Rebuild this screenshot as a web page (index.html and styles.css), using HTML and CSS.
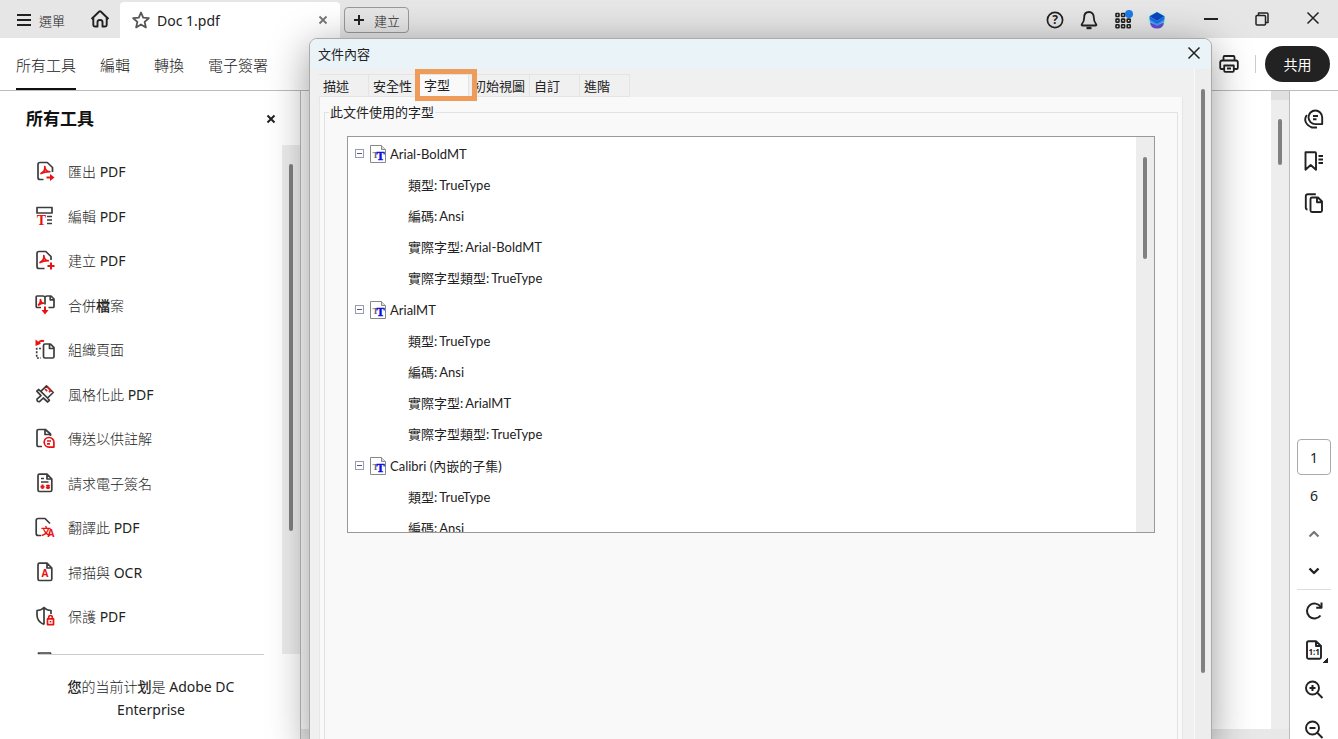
FILE: index.html
```html
<!DOCTYPE html>
<html lang="zh-Hant">
<head>
    <meta charset="UTF-8">
    <title>Doc 1.pdf</title>
    <meta name="viewport" content="width=device-width, initial-scale=1.0">
    <link rel="stylesheet" href="styles.css">
</head>
<body>
    <div class="app">
        <!-- window title bar -->
        <header class="titlebar">
            <button class="menu-btn" type="button">
                <svg class="icon" width="16" height="16" viewBox="0 0 16 16"><path d="M1 3h14M1 8h14M1 13h14" stroke-width="2"/></svg>
                選單
            </button>
            <button class="home-btn" type="button" aria-label="首頁">
                <svg class="icon" width="20" height="20" viewBox="0 0 20 20"><path d="M1.500 10 9 2.800q1-.9 2 0l7.500 7.200M3.300 8.500V16q0 1.500 1.500 1.500h2.700v-4.500q0-2 2.500-2t2.500 2v4.500h2.700q1.500 0 1.500-1.500V8.500" stroke-width="1.900"/></svg>
            </button>
            <div class="doc-tab">
                <svg class="icon star" width="18" height="18" viewBox="0 0 18 18"><path d="m9 1.500 2.200 5.200 5.600.5-4.200 3.700 1.300 5.500L9 13.500l-4.900 2.900 1.300-5.500L1.200 7.200l5.600-.5z" stroke-width="1.800"/></svg>
                <span class="doc-name">Doc 1.pdf</span>
                <button type="button" aria-label="關閉標籤">
                    <svg class="icon grey" width="10" height="10" viewBox="0 0 10 10"><path d="m1.500 1.500 7 7m0-7-7 7" stroke-width="1.800"/></svg>
                </button>
            </div>
            <button class="create-btn" type="button">
                <svg class="icon" width="12" height="12" viewBox="0 0 12 12"><path d="M6 1v10M1 6h10" stroke-width="2"/></svg>
                建立
            </button>
            <div class="title-tools">
                <button type="button" aria-label="說明">
                    <svg class="icon" width="18" height="18" viewBox="0 0 18 18"><circle cx="9" cy="9" r="7.600" stroke-width="1.700"/><text x="9" y="13.200" class="glyph help solid">?</text></svg>
                </button>
                <button type="button" aria-label="通知">
                    <svg class="icon" width="18" height="20" viewBox="0 0 18 20"><path d="M9 2C5.800 2 4.200 4.500 4.200 7.500c0 4-1 5-2.400 6.700-.4.600-.1 1.300.6 1.300h13.200c.7 0 1-.7.6-1.300-1.400-1.700-2.400-2.700-2.400-6.700C13.800 4.500 12.200 2 9 2z" stroke-width="1.800"/><path d="M6.500 18h5" stroke-width="2.400"/></svg>
                </button>
                <button type="button" aria-label="應用程式">
                    <svg class="icon" width="20" height="20" viewBox="0 0 20 20"><g stroke-width="1.600"><rect x="3" y="3.500" width="3" height="3" rx=".5"/><rect x="8.600" y="3.500" width="3" height="3" rx=".5"/><rect x="3" y="9.100" width="3" height="3" rx=".5"/><rect x="8.600" y="9.100" width="3" height="3" rx=".5"/><rect x="14.200" y="9.100" width="3" height="3" rx=".5"/><rect x="3" y="14.700" width="3" height="3" rx=".5"/><rect x="8.600" y="14.700" width="3" height="3" rx=".5"/><rect x="14.200" y="14.700" width="3" height="3" rx=".5"/></g><circle cx="16" cy="4" r="4" class="badge"/></svg>
                </button>
                <button type="button" aria-label="帳戶">
                    <svg width="20" height="20" viewBox="0 0 20 20"><circle cx="10" cy="10" r="9" fill="#c3f3df"/><path d="M3 12.500 10 15l7-2.500q-.5 6-7 6T3 12.500z" fill="#6b45d8"/><path d="m2.800 8.500 7.200 4 7.200-4v3.200L10 16l-7.200-4.300z" fill="#3aa0ee"/><path d="m10 2 7.500 4.300L10 11 2.500 6.300z" fill="#0b43c4"/><path d="M2.500 6.300 10 11l7.500-4.700v3L10 13.700 2.500 9.300z" fill="#176be6"/></svg>
                </button>
            </div>
            <div class="window-controls">
                <button type="button" aria-label="最小化"><svg class="icon" width="16" height="16" viewBox="0 0 16 16"><path d="M1 8h14" stroke-width="2"/></svg></button>
                <button type="button" aria-label="還原"><svg class="icon" width="16" height="16" viewBox="0 0 16 16"><rect x="2" y="4.500" width="9.500" height="9.500" rx="1"/><path d="M4.500 4V2H13q1 0 1 1v8.500h-2"/></svg></button>
                <button type="button" aria-label="關閉"><svg class="icon" width="16" height="16" viewBox="0 0 16 16"><path d="m2.500 1.500 11 11m0-11-11 11"/></svg></button>
            </div>
        </header>

        <div class="toolbar">
            <nav class="main-nav">
                <a class="active" href="#">所有工具</a>
                <a href="#">編輯</a>
                <a href="#">轉換</a>
                <a href="#">電子簽署</a>
            </nav>
            <button class="print-btn" type="button" aria-label="列印">
                <svg class="icon" width="20" height="20" viewBox="0 0 20 20"><path d="M4.500 6V3.200q0-1.200 1.200-1.200h8.600q1.200 0 1.200 1.200V6M5 15H2.500q-1.300 0-1.300-1.300V8.500Q1.200 6.500 3.200 6.500h13.600q2 0 2 2v5.200q0 1.300-1.300 1.300H15" stroke-width="1.800"/><path d="M5.200 11.500h9.600v5.300q0 1-1 1H6.200q-1 0-1-1zM8 14.500h4" stroke-width="1.800"/></svg>
            </button>
            <button class="share-btn" type="button">共用</button>
        </div>

        <div class="workspace">
            <aside class="tools-panel">
                <div class="panel-head">
                    <h2>所有工具</h2>
                    <button type="button" aria-label="關閉面板"><svg class="icon" width="10" height="10" viewBox="0 0 10 10"><path d="m1.500 1.500 7 7m0-7-7 7" stroke-width="2"/></svg></button>
                </div>
                <div class="tools-scroll">
                    <ul class="tool-list">
                        <li><a href="#">
                            <svg class="icon" viewBox="0 0 20 20"><path d="M8.500 18.500H5q-2 0-2-2v-13q0-2 2-2h7.300L17.500 6.500V11"/><path class="red" d="M6 12.500C8.500 11 10.300 8.500 9.800 5.500c.3 3 2 5.200 5 5.200-2.800 0-6.300.3-8.800 1.800z"/><path class="red thick" d="M11.500 16.500H16"/><path class="red-fill" d="m15 13 4.500 3.500L15 20z"/></svg>
                            <span>匯出 PDF</span></a></li>
                        <li><a href="#">
                            <svg class="icon" viewBox="0 0 20 20"><path d="M2 1.500h15v5.500H2zM12 10.500h5M12 14h5M12 17.500h5"/><text x="1.800" y="19" class="glyph serif red-fill">T</text></svg>
                            <span>編輯 PDF</span></a></li>
                        <li><a href="#">
                            <svg class="icon" viewBox="0 0 20 20"><path d="M9.500 18.500H4q-2 0-2-2v-13q0-2 2-2h6.800L16 6.500V10"/><path class="red" d="M5 12.500C7.500 11 9.300 8.500 8.800 5.500c.3 3 2 5.200 4.500 5.200-2.300 0-5.800.3-8.300 1.800z"/><path class="red thick" d="M16 12.500v7M12.500 16h7"/></svg>
                            <span>建立 PDF</span></a></li>
                        <li><a href="#">
                            <svg class="icon" viewBox="0 0 20 20"><path d="M6 12.500H2.200q-1 0-1-1V2q0-1 1-1H8q1.500 0 2 1.200Q10.500 1 12 1h4l3 3v7.500q0 1-1 1h-4.500M10 2.500v7M15.200 1v3.800H19"/><path class="red" d="M3.500 10c1.500-1 2.300-3 2-5.500.3 2.500 1 3.700 2.800 3.700-2 0-3.300.6-4.800 1.800z"/><path class="red thick" d="M10 11.500V16"/><path class="red-fill" d="m6.500 15 3.500 4.500 3.500-4.500z"/></svg>
                            <span>合併<b>檔</b>案</span></a></li>
                        <li><a href="#">
                            <svg class="icon" viewBox="0 0 20 20"><path d="M10 5h5.500L19 8.700v8.800q0 1.500-1.500 1.500H10q-1.500 0-1.500-1.500v-11Q8.500 5 10 5zM14.500 5v4.500H19"/><path stroke-dasharray="2 1.500" d="M6 9.500H1.700V19H6"/><path class="red thick" d="M9 2.200Q5.500.8 3.500 4"/><path class="red-fill" d="M.5.500v6.500l5.500-2.300z"/></svg>
                            <span>組織頁面</span></a></li>
                        <li><a href="#">
                            <svg class="icon" viewBox="0 0 20 20"><path d="m11.500 1.800 6.700 6.700-5.700 5.500-6.700-6.700zM5.800 7.300 3.500 5.500 1.800 7.200l4.200 4.500-4 3.500q-.3 2.800 2.500 2.500L8.300 14l4.400 4 1.700-1.700-1.900-2.300"/><path class="red" d="m10 5 2.200 2.200M12.200 3l3.200 3.200M14 8.200l1.800-1.800"/></svg>
                            <span>風格化此 PDF</span></a></li>
                        <li><a href="#">
                            <svg class="icon" viewBox="0 0 20 20"><path d="M7 18.500H3.800Q2 18.500 2 16.700V3.200q0-1.700 1.800-1.700h6.500L15.500 6v2M10 1.800v4.700h5"/><path class="red" d="M14 9.500a4.800 4.800 0 1 0 0 9.600h4.900v-4.800A4.800 4.800 0 0 0 14 9.500zM12 13h4M12 15.800h3"/></svg>
                            <span>傳送以供註解</span></a></li>
                        <li><a href="#">
                            <svg class="icon" viewBox="0 0 20 20"><path d="M4.500 1.200H12L16.800 6v11q0 1.500-1.500 1.500H4.500Q3 18.500 3 17V2.700q0-1.500 1.500-1.500zM12 1.500V6h4.500M6 5.500h3M6 9h7.500"/><path class="red thick" d="M7.500 11.500v4.500M5.500 13.700h4M11.500 12l3 3.500m0-3.500-3 3.500"/></svg>
                            <span>請求電子簽名</span></a></li>
                        <li><a href="#">
                            <svg class="icon" viewBox="0 0 20 20"><path d="M6 18.500H3.200q-2 0-2-2v-13q0-2 2-2H10L15 6.500"/><text x="6" y="17.500" class="glyph red-fill">文</text><text x="12.500" y="19.500" class="glyph red-fill">A</text></svg>
                            <span>翻譯此 PDF</span></a></li>
                        <li><a href="#">
                            <svg class="icon" viewBox="0 0 20 20"><path d="M4.500 1.200H12L16.800 6v11q0 1.500-1.500 1.500H4.500Q3 18.500 3 17V2.700q0-1.500 1.500-1.500zM12 1.500V6h4.500"/><text x="6.500" y="15" class="glyph red-fill">A</text></svg>
                            <span>掃描與 OCR</span></a></li>
                        <li><a href="#">
                            <svg class="icon" viewBox="0 0 20 20"><path d="M9 18.500Q2 15.500 2 9V4.500q4 0 7-3 3 3 7 3V8M9 1.500v17"/><rect class="red" x="12.500" y="12.800" width="6" height="5.800"/><path class="red" d="M13.700 12.500v-1.200q0-1.800 1.800-1.800t1.800 1.800v1.200"/><path class="red" d="M15.500 15v1.500"/></svg>
                            <span>保護 PDF</span></a></li>
                        <li><a href="#" aria-label="更多工具">
                            <svg class="icon" viewBox="0 0 20 20"><rect x="3.500" y="2" width="12" height="16"/></svg></a></li>
                    </ul>
                    <div class="scrollbar"><div class="thumb tools-thumb"></div></div>
                </div>
                <p class="plan"><b>您</b>的当前计<b>划</b>是 Adobe DC Enterprise</p>
            </aside>

            <main class="document">
                <div class="page-view"></div>
                <div class="scrollbar doc-scrollbar"><div class="thumb doc-thumb"></div></div>
            </main>

            <aside class="rail">
                <div class="rail-top">
                    <button type="button" aria-label="註解"><svg class="icon" viewBox="0 0 20 20"><path d="M11.300 1.500a6.800 6.800 0 1 0 0 13.600h6.900V8.300A6.900 6.900 0 0 0 11.300 1.500zM9 7h5M9 10.200h3.500"/><path d="M2.800 6Q.3 9.500 1.700 13t6.300 5.500h5"/></svg></button>
                    <button type="button" aria-label="書籤"><svg class="icon" viewBox="0 0 20 20"><path d="M1.500 1.200H11q1 0 1 1v16.500L6.700 14l-5.200 4.700zM14.500 5h4.500M14.500 8.500h4.500M14.500 12h4.500"/></svg></button>
                    <button type="button" aria-label="頁面"><svg class="icon" viewBox="0 0 20 20"><path d="M8 4.500h6l4 4v9q0 1.500-1.500 1.500H8q-1.500 0-1.500-1.500V6Q6.500 4.500 8 4.500zM13 4.500v4.700h4.700M3.500 16.500Q1.800 16.500 1.800 14.500V3.200q0-2 2-2h8"/></svg></button>
                </div>
                <div class="rail-bottom">
                    <input class="page-no" type="text" value="1" aria-label="頁碼">
                    <span class="page-total">6</span>
                    <button class="page-up" type="button" aria-label="上一頁"><svg class="icon grey" width="12" height="12" viewBox="0 0 12 12"><path d="m1.500 8.500 4.500-4.500 4.500 4.500" stroke-width="2.200"/></svg></button>
                    <button class="page-down" type="button" aria-label="下一頁"><svg class="icon" width="12" height="12" viewBox="0 0 12 12"><path d="m1.500 3.500 4.500 4.500 4.500-4.500" stroke-width="2.400"/></svg></button>
                    <div class="view-tools">
                        <button type="button" aria-label="旋轉"><svg class="icon" viewBox="0 0 20 20"><path d="M16.500 15.500A7.500 7.500 0 1 1 16.800 7" stroke-width="2"/><path d="M17.500 2.500v5.200h-5.300" stroke-width="2"/></svg></button>
                        <button type="button" class="more" aria-label="實際大小"><svg class="icon" viewBox="0 0 20 20"><path d="M4.500 1.200H12L17 6v11.300q0 1.500-1.500 1.500h-11Q3 18.800 3 17.300V2.700q0-1.500 1.500-1.500zM12 1.500V6h4.500"/><text x="4.500" y="14.500" class="glyph small solid">1:1</text></svg></button>
                        <button type="button" aria-label="放大"><svg class="icon" viewBox="0 0 20 20"><circle cx="8.500" cy="8" r="6.500"/><path d="m13 12.500 5.500 5.500M5.500 8h6M8.500 5v6" stroke-width="2"/></svg></button>
                        <button type="button" aria-label="縮小"><svg class="icon" viewBox="0 0 20 20"><circle cx="8.500" cy="8" r="6.500"/><path d="m13 12.500 5.500 5.500M5.500 8h6" stroke-width="2"/></svg></button>
                    </div>
                </div>
            </aside>
        </div>
    </div>

    <!-- document properties dialog -->
    <div class="dialog" role="dialog" aria-labelledby="dialogTitle">
        <div class="dialog-title">
            <span id="dialogTitle">文件內容</span>
            <button type="button" aria-label="關閉對話方塊"><svg class="icon" width="14" height="14" viewBox="0 0 14 14"><path d="m1.500 1.500 11 11m0-11-11 11"/></svg></button>
        </div>
        <div class="dialog-body">
            <div class="dialog-content">
                <div class="tabs" role="tablist">
                    <button type="button" role="tab">描述</button>
                    <button type="button" role="tab">安全性</button>
                    <button type="button" role="tab" class="selected" aria-selected="true">字型</button>
                    <button type="button" role="tab">初始視圖</button>
                    <button type="button" role="tab">自訂</button>
                    <button type="button" role="tab">進階</button>
                </div>
                <div class="tab-panel">
                    <fieldset>
                        <legend>此文件使用的字型</legend>
                        <div class="font-box">
                            <ul class="font-tree">
                                <li>
                                    <div class="font-name">
                                        <button type="button" aria-label="收合"></button>
                                        <svg width="16" height="18" viewBox="0 0 16 18"><path d="M.5.500h11l4 4v13H.500z" fill="#fff" stroke="#888"/><path d="M11.500.500v4h4" fill="#ddd" stroke="#888"/><text x="2.500" y="12.500" class="tt back">T</text><text x="6.500" y="15" class="tt">T</text></svg>
                                        Arial-BoldMT
                                    </div>
                                    <ul>
                                        <li>類型:<span>TrueType</span></li>
                                        <li>編碼:<span>Ansi</span></li>
                                        <li>實際字型:<span>Arial-BoldMT</span></li>
                                        <li>實際字型類型:<span>TrueType</span></li>
                                    </ul>
                                </li>
                                <li>
                                    <div class="font-name">
                                        <button type="button" aria-label="收合"></button>
                                        <svg width="16" height="18" viewBox="0 0 16 18"><path d="M.5.500h11l4 4v13H.500z" fill="#fff" stroke="#888"/><path d="M11.500.500v4h4" fill="#ddd" stroke="#888"/><text x="2.500" y="12.500" class="tt back">T</text><text x="6.500" y="15" class="tt">T</text></svg>
                                        ArialMT
                                    </div>
                                    <ul>
                                        <li>類型:<span>TrueType</span></li>
                                        <li>編碼:<span>Ansi</span></li>
                                        <li>實際字型:<span>ArialMT</span></li>
                                        <li>實際字型類型:<span>TrueType</span></li>
                                    </ul>
                                </li>
                                <li>
                                    <div class="font-name">
                                        <button type="button" aria-label="收合"></button>
                                        <svg width="16" height="18" viewBox="0 0 16 18"><path d="M.5.500h11l4 4v13H.500z" fill="#fff" stroke="#888"/><path d="M11.500.500v4h4" fill="#ddd" stroke="#888"/><text x="2.500" y="12.500" class="tt back">T</text><text x="6.500" y="15" class="tt">T</text></svg>
                                        Calibri (內嵌的子集)
                                    </div>
                                    <ul>
                                        <li>類型:<span>TrueType</span></li>
                                        <li>編碼:<span>Ansi</span></li>
                                    </ul>
                                </li>
                            </ul>
                            <div class="scrollbar"><div class="thumb font-thumb"></div></div>
                        </div>
                    </fieldset>
                </div>
            </div>
            <div class="scrollbar dialog-scrollbar"><div class="thumb dialog-thumb"></div></div>
        </div>
    </div>
</body>
</html>
```
FILE: styles.css
```css
/* Global Reset */
*,
*::before,
*::after {
    margin: 0;
    padding: 0;
    box-sizing: border-box;
}
body {
    font-family: 'Noto Sans', 'Noto Sans CJK TC Light', 'Noto Sans CJK TC', sans-serif;
    font-size: 14px;
    height: 100vh;
    color: #222;
    background: #fff;
    overflow: hidden;
}
button {
    display: flex;
    align-items: center;
    justify-content: center;
    border: none;
    background: none;
    font: inherit;
    color: inherit;
    cursor: pointer;
}
a {
    color: inherit;
    text-decoration: none;
}
ul {
    list-style: none;
}

/* Icons */
.icon {
    fill: none;
    stroke: #222;
    stroke-width: 1.5;
    stroke-linejoin: round;
    flex: none;
}
.icon.grey {
    stroke: #777;
}
.icon .solid {
    fill: #222;
    stroke: none;
}
.icon .badge {
    fill: #1b7be6;
    stroke: none;
}
.icon .red {
    stroke: #e81212;
}
.icon .thick {
    stroke-width: 2;
}
.icon .red-fill {
    fill: #e81212;
    stroke: none;
}
.glyph {
    font-family: 'Noto Sans', 'Noto Sans CJK TC', sans-serif;
    font-size: 10px;
    font-weight: bold;
}
.glyph.small {
    font-size: 8px;
}
.glyph.serif {
    font-family: 'Liberation Serif', serif;
    font-size: 14px;
}
.glyph.help {
    font-size: 12px;
    text-anchor: middle;
}

/* Scrollbars */
.scrollbar {
    flex: none;
    width: 18px;
    background: #ededed;
}
.thumb {
    width: 4px;
    margin: 0 auto;
    border-radius: 2px;
    background: #808080;
}

.app {
    height: 100%;
    display: flex;
    flex-direction: column;
}

/* Title bar */
.titlebar {
    height: 38px;
    flex: none;
    display: flex;
    align-items: center;
    background: #e6e6e6;
}
.menu-btn {
    gap: 7px;
    padding: 2px 0 0 16px;
    font-size: 13px;
}
.home-btn {
    width: 55px;
    padding-left: 14px;
}
.doc-tab {
    width: 220px;
    align-self: stretch;
    display: flex;
    align-items: center;
    margin-top: 2px;
    padding: 0 12px;
    border-radius: 4px 4px 0 0;
    background: #fff;
}
.star {
    stroke: #555;
}
.doc-name {
    flex: 1;
    padding-left: 7px;
}
.create-btn {
    gap: 9px;
    height: 26px;
    width: 65px;
    margin: 2px 0 0 4px;
    border: 1px solid #999;
    border-radius: 4px;
    font-size: 13px;
}
.title-tools {
    display: flex;
    margin-left: auto;
    padding-top: 2px;
}
.title-tools button {
    width: 34px;
}
.window-controls {
    display: flex;
    padding-left: 11px;
}
.window-controls button {
    width: 51px;
}

/* Toolbar */
.toolbar {
    height: 53px;
    flex: none;
    display: flex;
    align-items: center;
    padding: 0 8px 0 16px;
    border-bottom: 1px solid #bbb;
}
.main-nav {
    display: flex;
    align-self: stretch;
    gap: 24px;
    margin-right: auto;
    font-size: 15px;
}
.main-nav a {
    display: flex;
    align-items: center;
    border-top: 2px solid transparent;
    border-bottom: 2px solid transparent;
}
.main-nav a.active {
    border-bottom-color: #111;
}
.print-btn {
    width: 37px;
    height: 18px;
    padding-right: 16px;
    border-right: 1px solid #ccc;
}
.share-btn {
    width: 65px;
    height: 36px;
    margin-left: 9px;
    border-radius: 18px;
    background: #222;
    color: #fff;
    font-family: 'Noto Sans', 'Noto Sans CJK TC', sans-serif;
}

/* Workspace */
.workspace {
    flex: 1;
    min-height: 0;
    display: flex;
}
.tools-panel {
    width: 301px;
    flex: none;
    display: flex;
    flex-direction: column;
    border-right: 1px solid #bbb;
}
.panel-head {
    height: 54px;
    flex: none;
    display: flex;
    align-items: center;
    justify-content: space-between;
    padding: 0 24px 0 26px;
}
.panel-head h2 {
    padding-bottom: 2px;
    font-family: 'Noto Sans CJK TC', sans-serif;
    font-size: 17px;
    color: #111;
}
.panel-head button {
    padding-top: 2px;
}
.tools-scroll {
    flex: 1;
    min-height: 0;
    display: flex;
    overflow: hidden;
}
.tool-list {
    flex: 1;
    height: 534px;
    display: flex;
    flex-direction: column;
    padding-left: 35px;
    padding-top: 4px;
    box-sizing: content-box;
}
.tool-list li {
    flex: 1;
}
.tool-list a {
    height: 100%;
    display: flex;
    align-items: center;
}
.tool-list .icon {
    width: 20px;
    height: 20px;
    margin-right: 13px;
    stroke: #3c3c3c;
    stroke-width: 1.7;
}
.tools-thumb {
    height: 367px;
    margin-top: 19px;
}
.plan {
    flex: none;
    height: 85px;
    margin: 0 36px 0 38px;
    padding: 20px 12px 0;
    border-top: 1px solid #ccc;
    line-height: 23px;
    text-align: center;
}
.document {
    flex: 1;
    display: flex;
    padding-bottom: 10px;
    background: #e8e8e8;
}
.page-view {
    flex: 1;
    background: #fff;
}
.doc-scrollbar {
    border-top: 9px solid #e0e0e0;
}
.doc-thumb {
    height: 46px;
    margin-top: 19px;
}

/* Right rail */
.rail {
    width: 49px;
    flex: none;
    display: flex;
    flex-direction: column;
    justify-content: space-between;
    border-left: 1px solid #bbb;
}
.rail-top,
.rail-bottom {
    display: flex;
    flex-direction: column;
    align-items: center;
}
.rail-top {
    padding-top: 7px;
}
.rail-top button {
    width: 40px;
    height: 42px;
}
.rail .icon:not([width]) {
    width: 20px;
    height: 20px;
    stroke-width: 1.9;
}
.page-no {
    width: 34px;
    height: 36px;
    border: 1px solid #aaa;
    border-radius: 4px;
    font: inherit;
    color: inherit;
    text-align: center;
}
.page-total {
    height: 40px;
    line-height: 42px;
}
.page-up,
.page-down {
    width: 34px;
    height: 37px;
}
.view-tools {
    margin-bottom: -11px;
    border-top: 1px solid #ddd;
}
.view-tools button {
    width: 34px;
    height: 40px;
}
.more {
    position: relative;
}
.more::after {
    content: '';
    position: absolute;
    right: 3px;
    bottom: 7px;
    width: 5px;
    height: 5px;
    background: linear-gradient(135deg, transparent 50%, #222 50%);
}

/* Dialog, over the workspace */
.dialog {
    position: absolute;
    top: 38px;
    left: 309px;
    right: 126px;
    bottom: -10px;
    display: flex;
    flex-direction: column;
    border: 1px solid #aaa;
    border-radius: 8px;
    background: #f0f0f0;
    box-shadow: 0 8px 40px rgba(0, 0, 0, 0.4);
    font-family: Lato, 'Noto Sans CJK TC', sans-serif;
    font-size: 13px;
    overflow: hidden;
}
.dialog-title {
    height: 30px;
    flex: none;
    display: flex;
    align-items: center;
    justify-content: space-between;
    padding: 0 10px 2px 8px;
    background: #eaf4f8;
}
.dialog-body {
    flex: 1;
    display: flex;
}
.dialog-content {
    flex: 1;
    display: flex;
    flex-direction: column;
    padding: 5px 11px 0 9px;
}
.tabs {
    display: flex;
}
.tabs button {
    justify-content: flex-start;
    min-width: 50px;
    height: 23px;
    padding: 0 4px;
    border: 1px solid #e4e4e4;
    border-left-width: 0;
    white-space: nowrap;
}
.tabs .selected {
    position: relative;
    padding-left: 5px;
    padding-bottom: 2px;
    background: #f9f9f9;
}
.tabs .selected::after {
    content: '';
    position: absolute;
    top: -6px;
    left: -4px;
    width: 62px;
    height: 32px;
    border: 5px solid #ef9b5a;
}
.tab-panel {
    flex: 1;
    display: flex;
    padding: 6px 4px 0;
    border: 1px solid #e6e6e6;
    border-top: none;
    background: #f9f9f9;
}
fieldset {
    flex: 1;
    min-width: 0;
    padding: 15px 22px 0;
    border: 1px solid #e2e2e2;
}
legend {
    margin-left: -18px;
    padding: 0 1px;
    line-height: 18px;
}
.font-box {
    height: 397px;
    display: flex;
    border: 1px solid #999;
    background: #fff;
    overflow: hidden;
}
.font-tree {
    flex: 1;
    padding: 1px 0 0 7px;
}
.font-name {
    height: 31px;
    display: flex;
    align-items: center;
    gap: 4px;
}
.font-name button {
    width: 9px;
    height: 9px;
    margin-right: 2px;
    border: 1px solid #9a9aa8;
}
.font-name button::before {
    content: '';
    width: 5px;
    height: 1px;
    background: #4a5a9a;
}
.font-tree ul {
    padding: 1px 0 0 53px;
}
.font-tree ul li {
    height: 31px;
    line-height: 31px;
}
.font-tree ul span {
    padding-left: 2px;
}
.tt {
    font-family: 'Liberation Serif', serif;
    font-size: 12px;
    font-weight: bold;
    fill: #1010d8;
    stroke: #1010d8;
    stroke-width: 0.5;
}
.tt.back {
    font-size: 9px;
    fill: #667;
    stroke: none;
}
.font-thumb {
    height: 102px;
    margin-top: 20px;
}
.dialog-scrollbar {
    width: 17px;
    border-left: 1px solid #f8f8f8;
}
.dialog-thumb {
    height: 584px;
    margin-top: 20px;
}
```
